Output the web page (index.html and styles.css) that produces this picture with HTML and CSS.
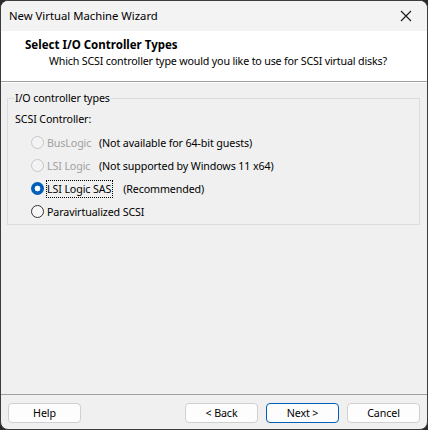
FILE: index.html
```html
<!DOCTYPE html>
<html>
<head>
<meta charset="utf-8">
<link rel="stylesheet" href="styles.css">
</head>
<body>
<div class="window">
  <div class="titlebar">
    <span class="title">New Virtual Machine Wizard</span>
    <svg class="close" width="12" height="12" viewBox="0 0 12 12"><path d="M1 1 L11 11 M11 1 L1 11" stroke="#1a1a1a" stroke-width="1.1" fill="none"/></svg>
  </div>
  <div class="header">
    <div class="h-title">Select I/O Controller Types</div>
    <div class="h-sub">Which SCSI controller type would you like to use for SCSI virtual disks?</div>
  </div>
  <div class="content">
    <fieldset class="group">
      <legend>I/O controller types</legend>
      <div class="sublabel">SCSI Controller:</div>
      <div class="row disabled"><span class="radio"></span><span class="lbl">BusLogic</span><span class="note">(Not available for 64-bit guests)</span></div>
      <div class="row disabled"><span class="radio"></span><span class="lbl">LSI Logic</span><span class="note">(Not supported by Windows 11 x64)</span></div>
      <div class="row"><span class="radio checked"></span><span class="lbl focus">LSI Logic SAS</span><span class="note">(Recommended)</span></div>
      <div class="row"><span class="radio"></span><span class="lbl">Paravirtualized SCSI</span></div>
    </fieldset>
  </div>
  <div class="footer">
    <button class="btn">Help</button>
    <div class="spacer"></div>
    <button class="btn">&lt; Back</button>
    <button class="btn default">Next &gt;</button>
    <button class="btn">Cancel</button>
  </div>
</div>
</body>
</html>
```

FILE: styles.css
```css
html, body {
  margin: 0;
  padding: 0;
  background: #2a2a2a;
}
body {
  width: 428px;
  height: 430px;
  font-family: "Noto Sans", "Open Sans", sans-serif;
  font-size: 10.7px;
  letter-spacing: -0.12px;
  color: #000;
}
.window {
  box-sizing: border-box;
  width: 428px;
  height: 430px;
  border: 1px solid #3c3c3c;
  border-radius: 8px;
  background: #f0f0f0;
  display: flex;
  flex-direction: column;
  overflow: hidden;
}
.titlebar {
  height: 30px;
  background: #f3f3f3;
  display: flex;
  align-items: center;
  padding: 0 10px 0 8px;
  flex: none;
  font-size: 11.3px;
  letter-spacing: 0;
}
.title {
  flex: 1;
  line-height: 16px;
}
.close {
  margin-right: 5px;
}
.header {
  background: #fff;
  height: 51px;
  box-sizing: border-box;
  border-bottom: 1px solid #a0a0a0;
  padding-top: 6px;
  flex: none;
}
.h-title {
  font-weight: bold;
  font-size: 11.5px;
  letter-spacing: 0;
  line-height: 16px;
  padding-left: 24px;
}
.h-sub {
  line-height: 16px;
  padding-left: 48px;
  white-space: nowrap;
  letter-spacing: -0.17px;
}
.content {
  flex: 1;
  border-top: 1px solid #fff;
}
.group {
  border: 1px solid #dcdcdc;
  margin: 7px 7px 0 6px;
  padding: 0 0 1px 6px;
}
.group legend {
  padding: 0 1px;
  line-height: 16px;
}
.sublabel {
  line-height: 16px;
  margin-top: 5px;
  margin-left: 1px;
  margin-bottom: 4px;
}
.row {
  height: 23px;
  display: flex;
  align-items: center;
  padding-left: 17px;
}
.radio {
  box-sizing: border-box;
  width: 13px;
  height: 13px;
  border-radius: 50%;
  border: 1px solid #333;
  background: #f7f7f7;
  margin-right: 3px;
  flex: none;
}
.radio.checked {
  border: none;
  background: radial-gradient(circle, #fff 0 2.6px, #005fb8 3.2px);
}
.row.disabled .radio {
  border-color: #c6c6c6;
  background: #f3f3f3;
}
.row.disabled .lbl {
  color: #a0a0a0;
}
.lbl {
  min-width: 52px;
  box-sizing: border-box;
  line-height: 16px;
}
.lbl.focus {
  outline: 1px dotted #000;
  outline-offset: 0;
  padding: 0 1px 0 0;
}
.note {
  line-height: 16px;
}
.lbl.focus + .note {
  margin-left: 11px;
}
.footer {
  flex: none;
  height: 35px;
  box-sizing: border-box;
  border-top: 1px solid #a0a0a0;
  padding: 8px 7px 0 7px;
  display: flex;
  align-items: flex-start;
  gap: 8px;
}
.spacer {
  flex: 1;
}
.btn {
  width: 73px;
  height: 20px;
  box-sizing: border-box;
  border: 1px solid #d0d0d0;
  border-radius: 4px;
  background: #fdfdfd;
  font-family: inherit;
  font-size: 10.7px;
  letter-spacing: -0.12px;
  color: #000;
  padding: 0;
  line-height: 16px;
}
.btn.default {
  border-color: #005fb8;
}
```
